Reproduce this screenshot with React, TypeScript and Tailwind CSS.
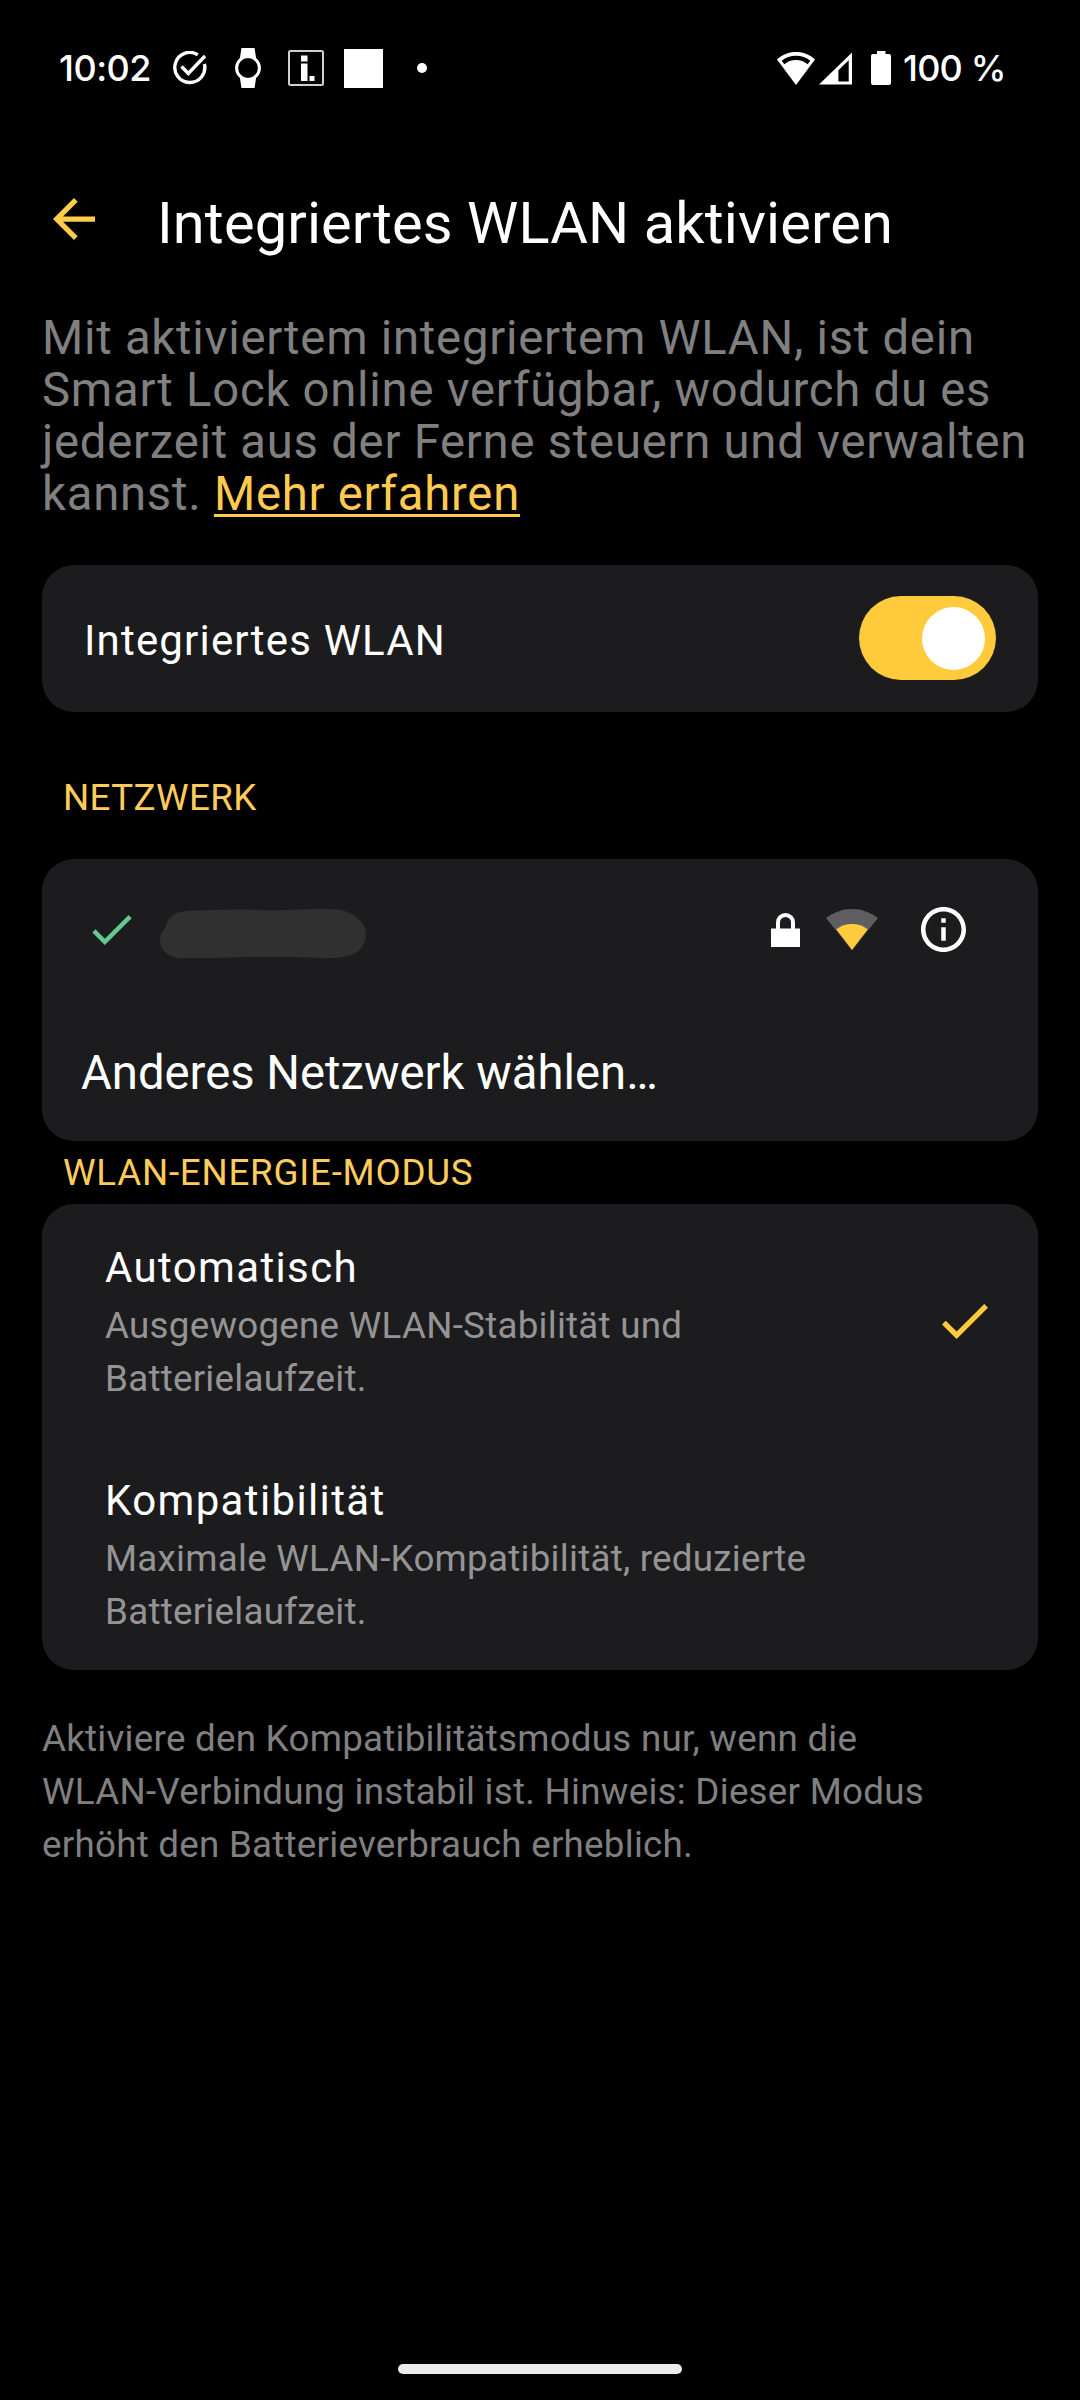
import { useState } from "react";

const Check = ({ className }: { className: string }) => (
  <svg viewBox="3.41 5.59 17.59 13.41" fill="currentColor" className={className}>
    <path d="M9 16.17 4.83 12l-1.42 1.41L9 19 21 7l-1.41-1.41z" />
  </svg>
);

const StatusBar = () => (
  <header className="flex h-[136px] items-start pt-12 pl-[59px] pr-[75px] font-['Inter',sans-serif] font-medium text-white">
    <span className="h-10 w-[92px] whitespace-nowrap text-[36px] leading-[40px] tracking-[-0.5px]">
      10:02
    </span>

    <div className="ml-[22px] flex h-10 items-center">
      {/* Task done */}
      <svg viewBox="0 0 34 34" className="h-[34px] w-[34px]" fill="none" stroke="currentColor" strokeWidth="3.4">
        <path d="M24.8 3.8A15 15 0 1 0 31.4 13" />
        <path d="m8.5 15.5 6.8 7L32 5" />
      </svg>
      {/* Watch */}
      <svg viewBox="0 0 26 40" className="ml-7 h-10 w-[26px]">
        <path fill="currentColor" d="M6.5 0h13L21 9.5v21L19.5 40h-13L5 30.5v-21z" />
        <circle cx="13" cy="20" r="11.4" fill="#000" stroke="currentColor" strokeWidth="3" />
      </svg>
      {/* News */}
      <svg viewBox="0 0 36 36" className="ml-[27px] h-9 w-9">
        <rect x="1" y="1" width="34" height="34" rx="1.5" fill="none" stroke="#d0d0d0" strokeWidth="2" />
        <path fill="currentColor" d="M13 5.5h6.5v6H13zM13 13.5h6.5V31H13zM21.5 26h5v5h-5z" />
      </svg>
      <div className="ml-5 h-[39px] w-[39px] bg-white" />
      <div className="ml-[34px] h-[10px] w-[10px] rounded-full bg-white" />
    </div>

    <div className="ml-auto flex h-10 items-center">
      {/* Wi-Fi */}
      <svg viewBox="0 0 38 33" className="h-[33px] w-[38px]">
        <path fill="currentColor" d="M19 0C11.8 0 5.2 2.6 0 7.6L19 33 38 7.6C32.8 2.6 26.2 0 19 0Z" />
        <path fill="#000" d="M19 3.8c-5.4 0-10.3 1.7-14.3 4.9l2.6 3.6C10.6 9.4 14.6 7.9 19 7.9s8.4 1.5 11.7 4.4l2.6-3.6C29.3 5.5 24.4 3.8 19 3.8Z" />
      </svg>
      {/* Mobile signal */}
      <svg viewBox="0 0 34 33" className="ml-1 h-[33px] w-[33px]">
        <path fill="currentColor" d="M34 0v33H0z" />
        <path fill="#000" d="M30.6 8v21.8H20V18.4z" />
      </svg>
      {/* Battery */}
      <svg viewBox="0 0 20 34" className="ml-[19px] h-[34px] w-5" fill="currentColor">
        <rect x="6" width="8.5" height="6" />
        <rect y="3" width="20" height="31" rx="2" />
      </svg>
      <span className="ml-3 w-[102px] whitespace-nowrap text-[36px] leading-[40px] tracking-[-0.8px]">
        100 %
      </span>
    </div>
  </header>
);

const modes = [
  {
    id: "auto",
    title: "Automatisch",
    lines: ["Ausgewogene WLAN-Stabilität und", "Batterielaufzeit."],
  },
  {
    id: "compat",
    title: "Kompatibilität",
    lines: ["Maximale WLAN-Kompatibilität, reduzierte", "Batterielaufzeit."],
  },
];

const App = () => {
  const [enabled, setEnabled] = useState(true);
  const [mode, setMode] = useState("auto");

  return (
    <div className="flex h-[2400px] w-[1080px] flex-col overflow-hidden bg-black font-['Roboto',sans-serif]">
      <StatusBar />

      {/* Title bar */}
      <div className="mt-[53px] flex h-[68px] items-start pl-[53px]">
        <button aria-label="Zurück" className="mt-[9px]">
          <svg viewBox="4 4 16 16" className="h-[42px] w-[42px]" fill="#ffcb4a">
            <path d="M20 11H7.83l5.59-5.59L12 4l-8 8 8 8 1.41-1.41L7.83 13H20z" />
          </svg>
        </button>
        <h1 className="ml-[62px] whitespace-nowrap text-[57.75px] leading-[68px] tracking-[0.13px] text-white">
          Integriertes WLAN aktivieren
        </h1>
      </div>

      <main className="flex flex-col px-[42px]">
        <p className="mt-[55px] whitespace-nowrap text-[47.25px] leading-[52px] tracking-[0.75px] text-[#808080]">
          Mit aktiviertem integriertem WLAN, ist dein
          <br />
          Smart Lock online verfügbar, wodurch du es
          <br />
          jederzeit aus der Ferne steuern und verwalten
          <br />
          kannst.{" "}
          <a className="text-[#ffcb4f] underline decoration-[2.5px] underline-offset-[4px]">
            Mehr erfahren
          </a>
        </p>

        <section className="mt-[45px] flex h-[147px] items-center justify-between rounded-[32px] bg-[#1c1c1e] px-[42px]">
          <span className="pt-1 text-[42px] leading-[50px] tracking-[1.18px] text-white">
            Integriertes WLAN
          </span>
          <button
            role="switch"
            aria-checked={enabled}
            aria-label="Integriertes WLAN"
            onClick={() => setEnabled(!enabled)}
            className={`mb-px flex h-[84px] w-[137px] items-center rounded-full px-[11px] ${
              enabled ? "justify-end bg-[#ffcb3d]" : "justify-start bg-[#48484a]"
            }`}
          >
            <span className="h-[63px] w-[63px] rounded-full bg-white" />
          </button>
        </section>

        <h2 className="mt-[62px] pl-[21px] text-[36.75px] leading-[48px] tracking-[0.4px] text-[#ffcb5a]">
          NETZWERK
        </h2>

        <section className="mt-[37px] flex h-[282px] flex-col rounded-[32px] bg-[#1c1c1e]">
          <div className="flex h-[141px] items-center pl-[50px] pr-[72px]">
            <Check className="h-[30px] w-10 text-[#62c98f]" />
            {/* Hidden network name */}
            <svg viewBox="0 0 206 50" className="mt-2 ml-7 h-[50px] w-[206px]">
              <path
                fill="#303030"
                d="M20 3C30 1 60 1 75 .5 95 0 110 2 130 1 150 0 170-.5 182 1c12 3 24 13 24 23 0 9-5 18-12 21-10 3-17 5-29 4-20-1-45-1-65-1-30 0-60 2-82 1C6 47 0 40 0 31c0-5 3-9 5-12C7 11 12 5 20 3Z"
              />
            </svg>
            <svg viewBox="0 0 29 34" className="ml-auto h-[34px] w-[29px]">
              <path fill="none" stroke="#fff" strokeWidth="4" d="M7 17V9.5a7.5 7.5 0 0 1 15 0V17" />
              <path fill="#fff" d="M0 15.5h29V34H0z" />
            </svg>
            <svg viewBox="0 0 52 41" className="ml-[26px] h-[41px] w-[52px]">
              <path fill="#5e5e60" d="M26 0C16.5 0 7.5 3.4 0 9l26 32L52 9C44.5 3.4 35.5 0 26 0Z" />
              <path fill="#ffcb3d" d="M26 15c-5.8 0-11.2 1.8-15.7 5.2L26 41l15.7-20.8C37.2 16.8 31.8 15 26 15Z" />
            </svg>
            <svg viewBox="2 2 20 20" className="ml-[43px] h-[45px] w-[45px]" fill="#fff">
              <path d="M11 7h2v2h-2zm0 4h2v6h-2zm1-9C6.48 2 2 6.48 2 12s4.48 10 10 10 10-4.48 10-10S17.52 2 12 2zm0 18c-4.41 0-8-3.59-8-8s3.59-8 8-8 8 3.59 8 8-3.59 8-8 8z" />
            </svg>
          </div>
          <button className="flex h-[141px] items-center pl-[39px] pt-1.5 text-[47.25px] text-white">
            Anderes Netzwerk wählen…
          </button>
        </section>

        <h2 className="flex h-[63px] items-center pl-[21px] text-[36.75px] tracking-[0.75px] text-[#ffcb5a]">
          WLAN-ENERGIE-MODUS
        </h2>

        <section className="flex h-[466px] flex-col rounded-[32px] bg-[#1c1c1e]">
          {modes.map((m) => (
            <button
              key={m.id}
              onClick={() => setMode(m.id)}
              className="flex h-[233px] items-center justify-between pl-[63px] pr-[50px] text-left"
            >
              <div className="self-start whitespace-nowrap pt-[39px]">
                <p className="text-[42px] leading-[50px] tracking-[1.36px] text-white">
                  {m.title}
                </p>
                <p className="mt-1.5 text-[36.75px] leading-[53px] tracking-[0.25px] text-[#949495]">
                  {m.lines[0]}
                  <br />
                  {m.lines[1]}
                </p>
              </div>
              {mode === m.id && <Check className="mt-px h-[35px] w-[46px] text-[#ffcb3d]" />}
            </button>
          ))}
        </section>

        <p className="mt-[43px] whitespace-nowrap text-[36.75px] leading-[52.8px] tracking-[0.25px] text-[#808080]">
          Aktiviere den Kompatibilitätsmodus nur, wenn die
          <br />
          WLAN-Verbindung instabil ist. Hinweis: Dieser Modus
          <br />
          erhöht den Batterieverbrauch erheblich.
        </p>
      </main>

      <div className="mb-[26px] mt-auto h-[10px] w-[284px] self-center rounded-full bg-[#ececec]" />
    </div>
  );
};

export default App;
